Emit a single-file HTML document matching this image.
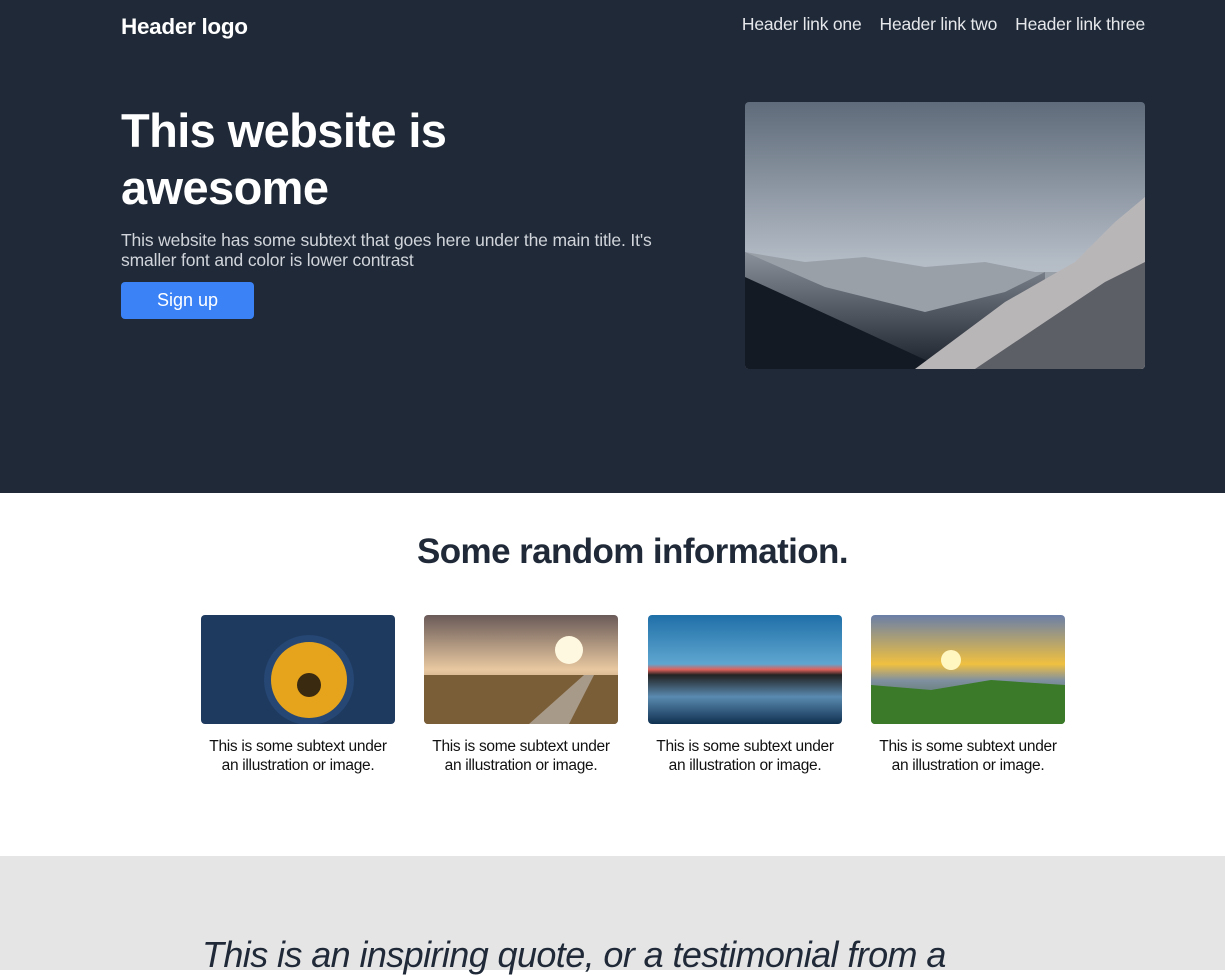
<!DOCTYPE html>
<html><head><meta charset="utf-8"><style>
*{margin:0;padding:0;box-sizing:border-box}
body{width:1225px;height:970px;overflow:hidden;font-family:"Liberation Sans",sans-serif;background:#fff}
.hero{background:#1f2937;height:493px;position:relative}
.logo{position:absolute;left:121px;top:14px;color:#fff;font-weight:bold;font-size:22.5px;letter-spacing:-0.3px}
.nav{position:absolute;right:80px;top:14px;color:#e5e7eb;font-size:17.5px;letter-spacing:-0.2px}
.nav span{margin-left:18px}
h1{position:absolute;left:121px;top:102px;color:#fff;font-size:47px;line-height:57px;font-weight:bold;width:420px;letter-spacing:-0.6px}
.sub{position:absolute;left:121px;top:230px;width:580px;color:#d1d5db;font-size:17.5px;line-height:20px;letter-spacing:-0.15px}
.btn{position:absolute;left:121px;top:282px;width:133px;height:37px;background:#3b82f6;border-radius:4px;color:#fff;font-size:18px;text-align:center;line-height:37px}
.himg{position:absolute;left:745px;top:102px;width:400px;height:267px;border-radius:4px;overflow:hidden}
h2{position:absolute;top:532px;left:40px;width:1185px;text-align:center;color:#1f2937;font-size:35px;font-weight:bold;letter-spacing:-0.6px}
.card{position:absolute;top:615px;width:194px;text-align:center;font-size:15.5px;line-height:19px;color:#111;letter-spacing:-0.3px}
.card .im{height:109px;border-radius:4px;overflow:hidden;margin-bottom:13px}
.quote{position:absolute;top:856px;left:0;width:1225px;height:114px;background:#e5e5e5}
.quote p{position:absolute;left:202px;top:78px;font-size:36px;font-style:italic;font-weight:300;color:#1f2937;white-space:nowrap;letter-spacing:-0.6px}
</style></head><body>
<div class="hero">
<div class="logo">Header logo</div>
<div class="nav"><span>Header link one</span><span>Header link two</span><span>Header link three</span></div>
<h1>This website is awesome</h1>
<div class="sub">This website has some subtext that goes here under the main title. It's smaller font and color is lower contrast</div>
<div class="btn">Sign up</div>
<div class="himg"><svg width="400" height="267"><defs><linearGradient id="sk" x1="0" y1="0" x2="0" y2="1"><stop offset="0" stop-color="#5f6b7a"/><stop offset=".6" stop-color="#b4bcc6"/><stop offset="1" stop-color="#c9cdd2"/></linearGradient><linearGradient id="v" x1="0" y1="0" x2="0" y2="1"><stop offset="0" stop-color="#8a919a"/><stop offset="1" stop-color="#1a202a"/></linearGradient></defs>
<rect width="400" height="267" fill="url(#sk)"/>
<path d="M0 150 L60 160 L120 155 L180 165 L240 160 L290 170 L320 170 L320 267 L0 267Z" fill="#9aa0a8"/>
<path d="M0 150 L80 185 L180 210 L260 190 L300 170 L300 267 L0 267Z" fill="url(#v)"/>
<path d="M0 175 L120 230 L200 267 L0 267Z" fill="#141a24"/>
<path d="M170 267 L260 200 L330 160 L370 120 L400 95 L400 267Z" fill="#b9b6b8"/>
<path d="M230 267 L300 220 L360 180 L400 160 L400 267Z" fill="#5d5f66"/>
</svg></div>
</div>
<h2>Some random information.</h2>
<div class="card" style="left:201px"><div class="im"><svg width="194" height="109"><rect width="194" height="109" fill="#1e3a5f"/><circle cx="108" cy="65" r="45" fill="#2c4f80" opacity=".6"/><circle cx="108" cy="65" r="38" fill="#e6a41c"/><circle cx="108" cy="70" r="12" fill="#3a2a10"/></svg></div>This is some subtext under an illustration or image.</div>
<div class="card" style="left:424px"><div class="im"><svg width="194" height="109"><defs><linearGradient id="a" x1="0" y1="0" x2="0" y2="1"><stop offset="0" stop-color="#6a5a58"/><stop offset=".5" stop-color="#e8c8a0"/><stop offset="1" stop-color="#6b5030"/></linearGradient></defs><rect width="194" height="109" fill="url(#a)"/><circle cx="145" cy="35" r="14" fill="#fff8e0"/><rect y="60" width="194" height="49" fill="#7a5e38"/><path d="M105 109 L160 60 L170 60 L145 109Z" fill="#a89a88"/></svg></div>This is some subtext under an illustration or image.</div>
<div class="card" style="left:648px"><div class="im"><svg width="194" height="109"><defs><linearGradient id="b" x1="0" y1="0" x2="0" y2="1"><stop offset="0" stop-color="#1f6fa8"/><stop offset=".45" stop-color="#5fa6d0"/><stop offset=".5" stop-color="#e0605a"/><stop offset=".55" stop-color="#222"/><stop offset=".75" stop-color="#5a8ab0"/><stop offset="1" stop-color="#0f3050"/></linearGradient></defs><rect width="194" height="109" fill="url(#b)"/></svg></div>This is some subtext under an illustration or image.</div>
<div class="card" style="left:871px"><div class="im"><svg width="194" height="109"><defs><linearGradient id="c" x1="0" y1="0" x2="0" y2="1"><stop offset="0" stop-color="#6a7fa8"/><stop offset=".45" stop-color="#f0c040"/><stop offset=".6" stop-color="#8090a0"/><stop offset="1" stop-color="#2a5a20"/></linearGradient></defs><rect width="194" height="109" fill="url(#c)"/><circle cx="80" cy="45" r="10" fill="#fff6c0"/><path d="M0 70 L60 75 L120 65 L194 70 L194 109 L0 109Z" fill="#3a7a28"/></svg></div>This is some subtext under an illustration or image.</div>
<div class="quote"><p>This is an inspiring quote, or a testimonial from a</p></div>
</body></html>
